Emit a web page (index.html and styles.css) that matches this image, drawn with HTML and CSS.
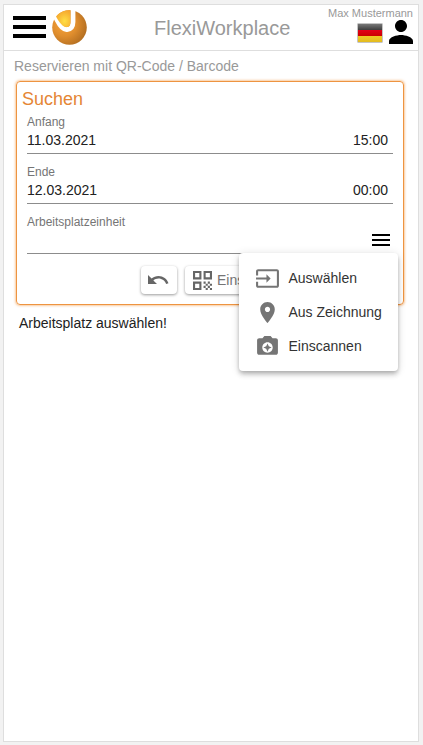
FILE: index.html
```html
<!DOCTYPE html>
<html lang="de">
<head>
<meta charset="utf-8">
<title>FlexiWorkplace</title>
<link rel="stylesheet" href="styles.css">
</head>
<body>
<div class="app">
  <header class="header">
    <svg class="burger" viewBox="0 0 33 22"><path d="M0 0h33v4H0zM0 9h33v4H0zM0 18h33v4H0z"/></svg>
    <svg class="logo" viewBox="0 0 36 36">
      <defs>
        <radialGradient id="ball" cx=".35" cy=".4" r=".7"><stop offset="0" stop-color="#f9a53a"/><stop offset=".5" stop-color="#e08e2e"/><stop offset="1" stop-color="#b06c20"/></radialGradient>
        <radialGradient id="core" cx=".6" cy=".65" r=".7"><stop offset="0" stop-color="#ffdf45"/><stop offset="1" stop-color="#f5a32c"/></radialGradient>
      </defs>
      <circle cx="18.500" cy="18.500" r="17.300" fill="url(#ball)"/>
      <path d="M-1 8L4 7L6 11C9 17 12 21 16 20.500C21 20 22 17 22 13V-1" fill="none" stroke="#fff" stroke-width="4.800"/>
      <path d="M5 7.500C8.500 3.500 13 1.200 19.300 1V13C19.300 17 18 18 15.500 18C11.500 18 8 13 5 7.500z" fill="url(#core)"/>
    </svg>
    <h1 class="title">FlexiWorkplace</h1>
    <div class="account">
      <span class="user-name">Max Mustermann</span>
      <div class="account-icons">
        <span class="flag"></span>
        <svg class="person" viewBox="4 4 16 16"><path d="M12 12c2.210 0 4-1.790 4-4s-1.790-4-4-4-4 1.790-4 4 1.790 4 4 4zm0 2c-2.670 0-8 1.340-8 4v2h16v-2c0-2.660-5.330-4-8-4z"/></svg>
      </div>
    </div>
  </header>
  <main class="content">
    <div class="crumb">Reservieren mit QR-Code / Barcode</div>
    <section class="card">
      <h2 class="card-title">Suchen</h2>
      <div class="field"><label>Anfang</label><div class="value"><span>11.03.2021</span><span>15:00</span></div></div>
      <div class="field"><label>Ende</label><div class="value"><span>12.03.2021</span><span>00:00</span></div></div>
      <div class="field"><label>Arbeitsplatzeinheit</label>
        <div class="value unit"><svg class="list-icon" viewBox="0 0 18 12"><path d="M0 0h18v2H0zM0 5h18v2H0zM0 10h18v2H0z"/></svg></div>
      </div>
      <div class="actions">
        <button class="btn undo"><svg viewBox="0 0 24 24"><path d="M12.500 8c-2.650 0-5.050.99-6.900 2.600L2 7v9h9l-3.620-3.620c1.390-1.160 3.160-1.880 5.120-1.880 3.540 0 6.550 2.310 7.600 5.500l2.370-.78C21.080 11.030 17.150 8 12.500 8z"/></svg></button>
        <button class="btn scan"><svg viewBox="3 3 18 18"><path d="M3 11h8V3H3v8zm2-6h4v4H5V5zM3 21h8v-8H3v8zm2-6h4v4H5v-4zM13 3v8h8V3h-8zm6 6h-4V5h4v4zM19 19h2v2h-2zM13 13h2v2h-2zM15 15h2v2h-2zM13 17h2v2h-2zM15 19h2v2h-2zM17 17h2v2h-2zM17 13h2v2h-2zM19 15h2v2h-2z"/></svg>Einscannen</button>
      </div>
      <div class="menu">
        <div class="item"><svg viewBox="0 0 24 24"><path d="M21 3.010H3c-1.100 0-2 .9-2 2V9h2V4.990h18v14.030H3V15H1v4.010c0 1.100.9 1.980 2 1.980h18c1.100 0 2-.88 2-1.980v-14c0-1.110-.9-2-2-2zM11 16l4-4-4-4v3H1v2h10v3z"/></svg>Auswählen</div>
        <div class="item"><svg viewBox="0 0 24 24"><path d="M12 2C8.130 2 5 5.130 5 9c0 5.250 7 13 7 13s7-7.750 7-13c0-3.870-3.130-7-7-7zm0 9.500c-1.380 0-2.500-1.120-2.500-2.500s1.120-2.500 2.500-2.500 2.500 1.120 2.500 2.500-1.120 2.500-2.500 2.500z"/></svg>Aus Zeichnung</div>
        <div class="item"><svg viewBox="0 0 24 24"><path d="M12 9l-1.250 2.750L8 13l2.750 1.250L12 17l1.250-2.750L16 13l-2.750-1.250z M20 4h-3.170L15 2H9L7.170 4H4c-1.100 0-2 .9-2 2v12c0 1.100.9 2 2 2h16c1.100 0 2-.9 2-2V6c0-1.100-.9-2-2-2zm-8 14c-2.760 0-5-2.240-5-5s2.240-5 5-5 5 2.240 5 5-2.240 5-5 5z"/></svg>Einscannen</div>
      </div>
    </section>
    <p class="message">Arbeitsplatz auswählen!</p>
  </main>
</div>
</body>
</html>
```

FILE: styles.css
```css
* { box-sizing: border-box; }
body {
  margin: 0;
  height: 745px;
  padding: 4px 4px 3px 3px;
  background: #f2f2f2;
  font: 14px/16px "Liberation Sans", Arial, sans-serif;
  color: #212121;
  overflow: hidden;
}
.app {
  height: 738px;
  background: #fff;
  border: 1px solid #dedede;
}
.header {
  display: grid;
  grid-template-columns: 33px 36px 1fr auto;
  height: 46px;
  padding: 0 5px 0 9px;
  border-bottom: 1px solid #dedede;
}
.burger { width: 33px; height: 22px; margin-top: 11px; }
.logo { width: 36px; height: 36px; margin: 4px 0 0 5px; }
.title {
  margin: 11px 0 0;
  padding-left: 72px;
  font-size: 20px;
  line-height: 24px;
  font-weight: 400;
  color: #999;
  white-space: nowrap;
}
.account { display: flex; flex-direction: column; align-items: flex-end; }
.user-name { margin-top: 2px; font-size: 11px; line-height: 13px; color: #999; }
.account-icons { display: flex; gap: 6px; }
.flag {
  width: 26px;
  height: 20px;
  margin-top: 3px;
  border: 1px solid #c4c4c4;
  border-radius: 1px;
  background: linear-gradient(#777 0, #3e3e3e 33%, #e4001a 33%, #cb0000 66%, #f0ca25 66%, #e3bb20 100%);
}
.person { width: 24px; height: 24px; }
.content { padding: 7px 14px 0 10px; }
.crumb { color: #999; line-height: 17px; }
.card {
  position: relative;
  width: 388px;
  height: 224px;
  margin: 6px 0 0 2px;
  padding: 7px 10px 0;
  border: 1px solid #ee9440;
  border-radius: 4px;
  box-shadow: 0 0 3px rgba(238, 137, 42, .9);
}
.card-title {
  margin: 0 0 0 -5px;
  font-size: 18px;
  line-height: 20px;
  font-weight: 400;
  color: #e58635;
}
.field { height: 50px; }
.field label { display: block; padding-top: 6px; font-size: 12px; line-height: 14px; color: #757575; }
.value {
  display: flex;
  justify-content: space-between;
  height: 25px;
  padding: 3px 5px 0 0;
  border-bottom: 1px solid #8c8c8c;
}
.unit { justify-content: flex-end; padding: 5px 3px 0 0; }
.list-icon { width: 18px; height: 12px; }
.actions { display: flex; gap: 8px; margin: 7px 0 0 114px; }
.btn {
  display: flex;
  align-items: center;
  height: 28px;
  border: 0;
  border-radius: 4px;
  background: #fff;
  box-shadow: 0 1px 3px rgba(0, 0, 0, .4);
  font: inherit;
  color: #757575;
}
.btn svg { fill: #666; }
.undo { width: 36px; padding: 0 5px; }
.undo svg { width: 24px; height: 24px; }
.scan { width: 112px; padding: 0 8px; gap: 5px; }
.scan svg { width: 19px; height: 19px; flex: none; }
.menu {
  position: absolute;
  left: 222px;
  top: 171px;
  width: 159px;
  height: 118px;
  padding: 8px 16px;
  border-radius: 4px;
  background: #fff;
  box-shadow: 0 2px 4px -1px rgba(0, 0, 0, .2), 0 4px 5px rgba(0, 0, 0, .14), 0 1px 10px rgba(0, 0, 0, .12);
  white-space: nowrap;
}
.item { display: flex; align-items: center; gap: 8.5px; height: 34px; color: #333; }
.item svg { width: 25px; height: 25px; fill: #757575; flex: none; }
.message { margin: 10px 0 0 5px; }
```
